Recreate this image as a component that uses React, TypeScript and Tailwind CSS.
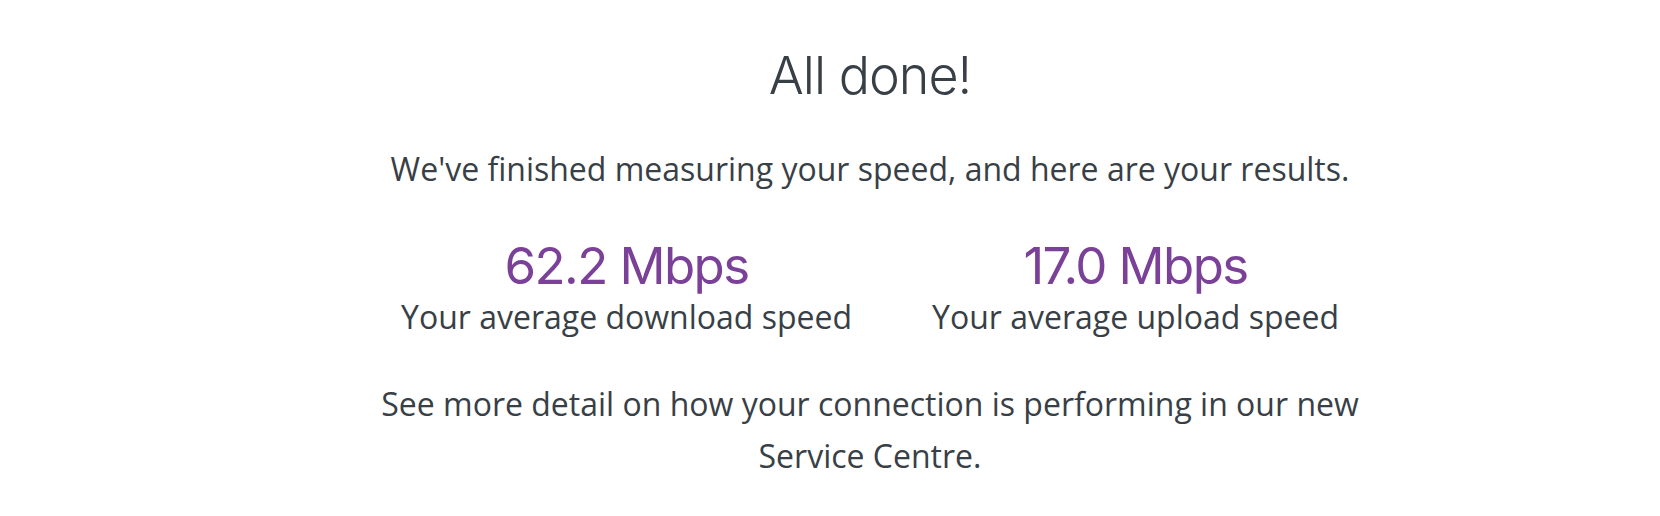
import React from 'react';

interface ResultProps {
  value: string;
  label: string;
}

const Result: React.FC<ResultProps> = ({ value, label }) => (
  <div className="flex flex-col items-center">
    <div className="font-['Inter','Noto_Sans',sans-serif] text-[51px] leading-none tracking-[-1.6px] text-[#7b4199]">
      {value}
    </div>
    <div className="mt-[6px] text-[32px] leading-[40px]">{label}</div>
  </div>
);

export default function App() {
  return (
    <div className="min-h-[516px] w-full bg-white pl-[80px]">
      <div className="flex flex-col items-center pt-[50px] text-center font-['Open_Sans','Liberation_Sans',sans-serif] text-[#383f46]">
        <h1 className="font-['Inter','Noto_Sans',sans-serif] text-[52px] font-light leading-none tracking-[-1px]">
          All done!
        </h1>
        <p className="mt-[47px] text-[32px] leading-[40px]">
          We've finished measuring your speed, and here are your results.
        </p>
        <div className="mt-[51px] flex justify-center gap-[80px]">
          <Result value="62.2 Mbps" label="Your average download speed" />
          <Result value="17.0 Mbps" label="Your average upload speed" />
        </div>
        <p className="mt-[41px] max-w-[1000px] text-[32px] leading-[52px]">
          See more detail on how your connection is performing in our new Service Centre.
        </p>
      </div>
    </div>
  );
}
